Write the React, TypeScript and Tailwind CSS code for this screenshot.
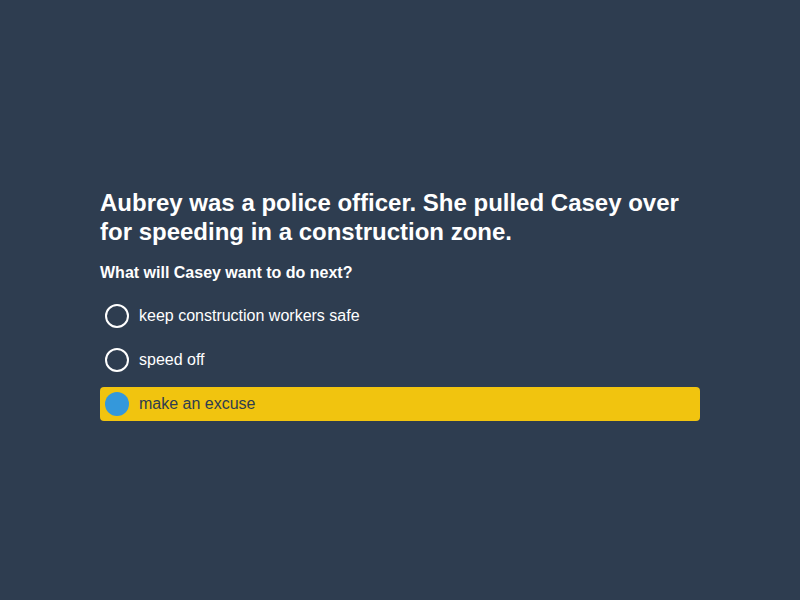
import React from "react";

const options = [
  { label: "keep construction workers safe", selected: false },
  { label: "speed off", selected: false },
  { label: "make an excuse", selected: true },
];

export default function App() {
  return (
    <div
      className="min-h-screen w-full bg-[#2e3d50] pt-[188px]"
      style={{ fontFamily: '"Liberation Sans", Arial, sans-serif' }}
    >
      <div className="mx-auto w-[600px]">
        <h1 className="text-[24px] font-bold leading-[29px] text-white">
          Aubrey was a police officer. She pulled Casey over for speeding in a construction zone.
        </h1>
        <p className="mt-[17px] text-[16px] font-bold leading-[20px] text-white">
          What will Casey want to do next?
        </p>
        <div className="mt-[16px] flex flex-col gap-[10px]">
          {options.map((o) => (
            <div
              key={o.label}
              className={
                o.selected
                  ? "flex h-[34px] items-center gap-[10px] rounded-[4px] bg-[#f1c40f] pl-[5px] text-[#2e3d50]"
                  : "flex h-[34px] items-center gap-[10px] rounded-[4px] pl-[5px] text-white"
              }
            >
              {o.selected ? (
                <span className="block h-[24px] w-[24px] rounded-full bg-[#3498db]" />
              ) : (
                <span className="block h-[24px] w-[24px] rounded-full border-2 border-white" />
              )}
              <span className="text-[16px] leading-[20px]">{o.label}</span>
            </div>
          ))}
        </div>
      </div>
    </div>
  );
}
